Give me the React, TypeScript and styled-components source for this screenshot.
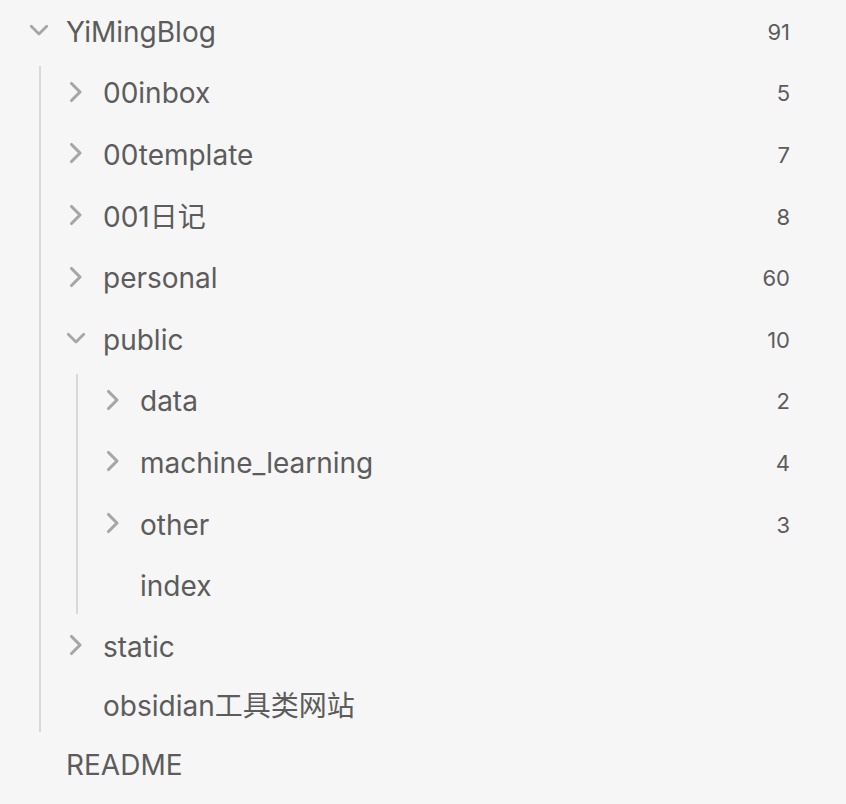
import React from "react";
import styled, { createGlobalStyle } from "styled-components";

const GlobalStyle = createGlobalStyle`
  html, body {
    margin: 0;
    padding: 0;
    background: #f6f6f6;
  }
  body {
    font-family: Inter, "Noto Sans CJK SC", sans-serif;
    color: #5c5c5c;
  }
`;

const Tree = styled.div`
  width: 846px;
  background: #f6f6f6;
`;

const Row = styled.div<{ $level: number; $h?: number }>`
  display: flex;
  align-items: center;
  box-sizing: border-box;
  height: ${(p) => p.$h ?? 61.6}px;
  padding-left: ${(p) => 29 + p.$level * 37}px;
  padding-right: 56px;
`;

const IconSlot = styled.div`
  flex: 0 0 37px;
  display: flex;
  align-items: center;
  margin-top: -1px;
`;

const IconBox = styled.div`
  width: 20px;
  height: 22px;
  display: flex;
  align-items: center;
  justify-content: center;
  color: #a6a6a6;
`;

const Label = styled.span`
  font-size: 28px;
  line-height: 1;
  white-space: nowrap;
  margin-top: 2px;
`;

const Count = styled.span`
  margin-left: auto;
  font-size: 22px;
  line-height: 1;
  color: #5c5c5c;
  margin-top: 2px;
`;

const Children = styled.div<{ $level: number }>`
  position: relative;
  &::before {
    content: "";
    position: absolute;
    left: ${(p) => 29 + p.$level * 37 + 10}px;
    top: 4px;
    bottom: 2px;
    width: 2px;
    background: #d9d9d9;
  }
`;

const Chevron = ({ open }: { open: boolean }) =>
  open ? (
    <svg width="22" height="14" viewBox="0 0 22 14" fill="none">
      <polyline
        points="2.5,3 11,11.5 19.5,3"
        stroke="currentColor"
        strokeWidth="3.1"
        strokeLinecap="round"
        strokeLinejoin="round"
      />
    </svg>
  ) : (
    <svg width="14" height="22" viewBox="0 0 14 22" fill="none">
      <polyline
        points="2.5,2.5 11,11 2.5,19.5"
        stroke="currentColor"
        strokeWidth="3.1"
        strokeLinecap="round"
        strokeLinejoin="round"
      />
    </svg>
  );

type Item = {
  name: string;
  count?: number;
  folder?: boolean;
  open?: boolean;
  h?: number;
  children?: Item[];
};

const data: Item = {
  name: "YiMingBlog",
  count: 91,
  folder: true,
  open: true,
  children: [
    { name: "00inbox", count: 5, folder: true },
    { name: "00template", count: 7, folder: true },
    { name: "001日记", count: 8, folder: true },
    { name: "personal", count: 60, folder: true },
    {
      name: "public",
      count: 10,
      folder: true,
      open: true,
      children: [
        { name: "data", count: 2, folder: true },
        { name: "machine_learning", count: 4, folder: true },
        { name: "other", count: 3, folder: true },
        { name: "index" },
      ],
    },
    { name: "static", folder: true, h: 60 },
    { name: "obsidian工具类网站", h: 58 },
  ],
};

const Node = ({ item, level }: { item: Item; level: number }) => (
  <>
    <Row $level={level} $h={item.h}>
      <IconSlot>
        {item.folder && (
          <IconBox>
            <Chevron open={!!item.open} />
          </IconBox>
        )}
      </IconSlot>
      <Label>{item.name}</Label>
      {item.count !== undefined && <Count>{item.count}</Count>}
    </Row>
    {item.open && item.children && (
      <Children $level={level}>
        {item.children.map((c) => (
          <Node key={c.name} item={c} level={level + 1} />
        ))}
      </Children>
    )}
  </>
);

export default function App() {
  return (
    <>
      <GlobalStyle />
      <Tree>
        <Node item={data} level={0} />
        <Node item={{ name: "README", h: 60 }} level={0} />
      </Tree>
    </>
  );
}
